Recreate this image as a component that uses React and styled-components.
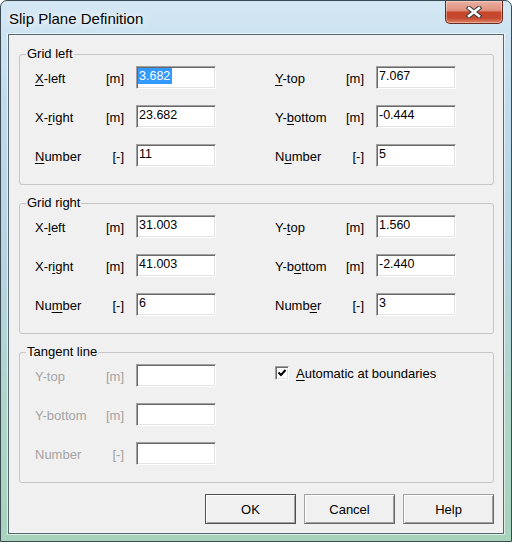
import React from 'react';
import styled, { createGlobalStyle } from 'styled-components';

const GlobalStyle = createGlobalStyle`
  html, body {
    margin: 0;
    padding: 0;
    background: #ffffff;
  }
  body {
    font-family: "Liberation Sans", Arial, sans-serif;
  }
`;

const Window = styled.div`
  box-sizing: border-box;
  width: 512px;
  height: 542px;
  display: flex;
  flex-direction: column;
  padding: 0 7px 8px 7px;
  border: 1px solid #3b4a52;
  border-radius: 7px 7px 0 0;
  background: linear-gradient(180deg, #d4e7f4 0%, #bdd9eb 22%, #b6d4df 50%, #aed5c6 78%, #a7d2bc 100%);
`;

const TitleBar = styled.div`
  display: flex;
  align-items: flex-start;
  height: 33px;
  flex-shrink: 0;
`;

const Title = styled.div`
  margin: 9px 0 0 1px;
  font-size: 15px;
  line-height: 18px;
  color: #000;
  text-shadow: 0 0 6px #fff, 0 0 10px rgba(255, 255, 255, 0.85);
`;

const CloseButton = styled.div`
  box-sizing: border-box;
  margin-left: auto;
  margin-right: 1px;
  width: 58px;
  height: 23px;
  display: flex;
  align-items: center;
  justify-content: center;
  border: 1px solid #6b2a1e;
  border-top: none;
  border-radius: 0 0 5px 5px;
  background: linear-gradient(180deg, #eab0a2 0%, #e09380 42%, #c8462c 52%, #c54a30 78%, #de8468 100%);
  box-shadow: inset 0 0 0 1px rgba(255, 255, 255, 0.35);
`;

const Client = styled.div`
  flex: 1;
  display: flex;
  flex-direction: column;
  padding: 12px 9px 9px 10px;
  border: 1px solid #56686f;
  box-shadow: 0 0 0 1px rgba(255, 255, 255, 0.6);
  background: #f0f0f0;
  font-size: 13px;
  color: #000;
`;

const GroupBox = styled.fieldset`
  margin: 0 0 11px 0;
  padding: 0;
  min-width: 0;
  border: 1px solid #c6c6c6;
  border-radius: 3px;
`;

const GroupTitle = styled.legend`
  margin-left: 6px;
  padding: 0 1px;
  font-size: 13px;
  line-height: 14px;
  color: #000;
`;

const GroupBody = styled.div`
  display: flex;
  gap: 59px;
  padding: 5px 0 17px 15px;
`;

const Column = styled.div`
  display: flex;
  flex-direction: column;
  gap: 16px;
  width: 181px;
`;

const Field = styled.div`
  display: grid;
  grid-template-columns: 70px 19px 92px;
  align-items: center;
  height: 23px;
  color: ${p => (p.$disabled ? '#a3a3a3' : '#000')};
`;

const Label = styled.span`
  white-space: nowrap;
  padding-top: 1px;
`;

const Unit = styled.span`
  text-align: right;
  white-space: nowrap;
  padding-top: 1px;
`;

const Key = styled.u`
  text-decoration: underline;
  text-underline-offset: 2px;
`;

const EditBox = styled.div`
  box-sizing: border-box;
  justify-self: end;
  width: 80px;
  height: 23px;
  padding: 1px 1px 2px 1px;
  border: 1px solid;
  border-color: #a0a0a0 #ffffff #ffffff #a0a0a0;
  box-shadow: inset 1px 1px 0 #696969, inset -1px -1px 0 #e3e3e3;
  background: #ffffff;
  font-size: 12.5px;
  line-height: 16px;
  color: #000;
  white-space: nowrap;
  overflow: hidden;
`;

const EditText = styled.span`
  display: inline-block;
  padding-left: 1px;
  background: ${p => (p.$selected ? '#3399ff' : 'transparent')};
  color: ${p => (p.$selected ? '#fff' : '#000')};
  border-right: ${p => (p.$selected ? '1px solid #d9731f' : 'none')};
  padding-right: ${p => (p.$selected ? '1px' : '0')};
`;

const CheckRow = styled.label`
  display: flex;
  align-items: center;
  gap: 7px;
  height: 18px;
  white-space: nowrap;
`;

const CheckBox = styled.span`
  box-sizing: border-box;
  width: 14px;
  height: 14px;
  display: flex;
  align-items: center;
  justify-content: center;
  border: 1px solid;
  border-color: #a0a0a0 #ffffff #ffffff #a0a0a0;
  box-shadow: inset 1px 1px 0 #696969, inset -1px -1px 0 #e3e3e3;
  background: #fff;
`;

const ButtonRow = styled.div`
  margin-top: auto;
  display: flex;
  justify-content: flex-end;
  gap: 8px;
`;

const Button = styled.button`
  box-sizing: border-box;
  width: 91px;
  height: 30px;
  padding: 0;
  border: 1px solid;
  border-color: ${p => (p.$primary ? '#505050' : '#a0a0a0 #696969 #696969 #a0a0a0')};
  box-shadow: inset 1px 1px 0 #ffffff, inset -1px -1px 0 #a0a0a0;
  background: #f0f0f0;
  font-family: "Liberation Sans", Arial, sans-serif;
  font-size: 13px;
  color: #000;
`;

const gridLeft = {
  left: [
    { label: <><Key>X</Key>-left</>, unit: '[m]', value: '3.682', selected: true },
    { label: <>X-<Key>r</Key>ight</>, unit: '[m]', value: '23.682' },
    { label: <><Key>N</Key>umber</>, unit: '[-]', value: '11' }
  ],
  right: [
    { label: <><Key>Y</Key>-top</>, unit: '[m]', value: '7.067' },
    { label: <>Y-<Key>b</Key>ottom</>, unit: '[m]', value: '-0.444' },
    { label: <>N<Key>u</Key>mber</>, unit: '[-]', value: '5' }
  ]
};

const gridRight = {
  left: [
    { label: <>X-<Key>l</Key>eft</>, unit: '[m]', value: '31.003' },
    { label: <>X-r<Key>i</Key>ght</>, unit: '[m]', value: '41.003' },
    { label: <>Nu<Key>m</Key>ber</>, unit: '[-]', value: '6' }
  ],
  right: [
    { label: <>Y-<Key>t</Key>op</>, unit: '[m]', value: '1.560' },
    { label: <>Y-b<Key>o</Key>ttom</>, unit: '[m]', value: '-2.440' },
    { label: <>Numb<Key>e</Key>r</>, unit: '[-]', value: '3' }
  ]
};

const tangent = [
  { label: 'Y-top', unit: '[m]', value: '' },
  { label: 'Y-bottom', unit: '[m]', value: '' },
  { label: 'Number', unit: '[-]', value: '' }
];

const InputField = ({ label, unit, value, selected, disabled }) => (
  <Field $disabled={disabled}>
    <Label>{label}</Label>
    <Unit>{unit}</Unit>
    <EditBox>
      <EditText $selected={selected}>{value}</EditText>
    </EditBox>
  </Field>
);

const GridGroup = ({ title, fields }) => (
  <GroupBox>
    <GroupTitle>{title}</GroupTitle>
    <GroupBody>
      <Column>
        {fields.left.map((f, i) => <InputField key={i} {...f} />)}
      </Column>
      <Column>
        {fields.right.map((f, i) => <InputField key={i} {...f} />)}
      </Column>
    </GroupBody>
  </GroupBox>
);

const CloseGlyph = () => (
  <svg width="16" height="12" viewBox="0 0 16 12">
    <path d="M3 2 L13 10 M13 2 L3 10" stroke="#3a3a3a" strokeWidth="4.6" strokeLinecap="square" />
    <path d="M3 2 L13 10 M13 2 L3 10" stroke="#ffffff" strokeWidth="2.6" strokeLinecap="square" />
  </svg>
);

const CheckMark = () => (
  <svg width="10" height="10" viewBox="0 0 10 10">
    <path d="M1.5 4.5 L4 7 L8.5 2" fill="none" stroke="#000" strokeWidth="2" />
  </svg>
);

const App = () => (
  <>
    <GlobalStyle />
    <Window>
      <TitleBar>
        <Title>Slip Plane Definition</Title>
        <CloseButton>
          <CloseGlyph />
        </CloseButton>
      </TitleBar>
      <Client>
        <GridGroup title="Grid left" fields={gridLeft} />
        <GridGroup title="Grid right" fields={gridRight} />
        <GroupBox>
          <GroupTitle>Tangent line</GroupTitle>
          <GroupBody>
            <Column>
              {tangent.map((f, i) => <InputField key={i} {...f} disabled />)}
            </Column>
            <Column>
              <CheckRow>
                <CheckBox>
                  <CheckMark />
                </CheckBox>
                <span><Key>A</Key>utomatic at boundaries</span>
              </CheckRow>
            </Column>
          </GroupBody>
        </GroupBox>
        <ButtonRow>
          <Button $primary>OK</Button>
          <Button>Cancel</Button>
          <Button>Help</Button>
        </ButtonRow>
      </Client>
    </Window>
  </>
);

export default App;
